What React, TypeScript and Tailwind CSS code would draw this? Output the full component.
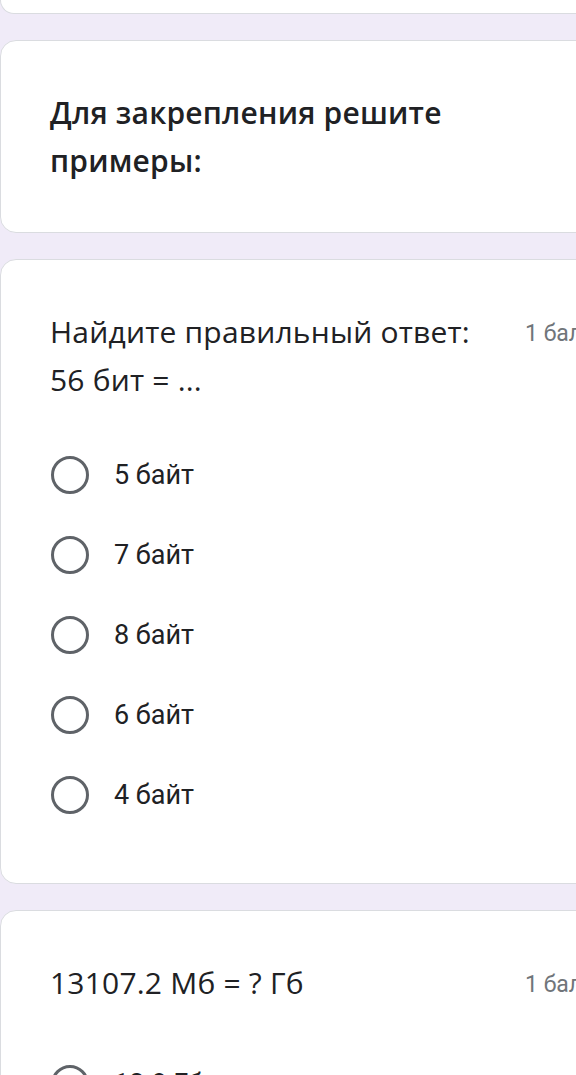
import React from "react";

const options = ["5 байт", "7 байт", "8 байт", "6 байт", "4 байт"];

function Radio({ label }: { label: string }) {
  return (
    <div className="flex h-[80px] items-center">
      <div className="ml-[1px] h-[38px] w-[38px] shrink-0 rounded-full border-[3.5px] border-[#5f6368]" />
      <span
        className="ml-[25px] text-[27px] leading-none text-[#202124]"
        style={{ fontFamily: "Roboto, 'Liberation Sans', sans-serif" }}
      >
        {label}
      </span>
    </div>
  );
}

export default function App() {
  const gs = { fontFamily: "'Open Sans', 'Liberation Sans', sans-serif" };
  const rb = { fontFamily: "Roboto, 'Liberation Sans', sans-serif" };
  return (
    <div className="h-[1075px] w-[576px] overflow-hidden bg-[#f0ebf8]">
      <div className="flex w-[640px] flex-col">
        {/* card 1 tail */}
        <div className="h-[14px] rounded-b-[16px] border-b border-l border-[#dadce0] bg-white" />
        {/* card 2 */}
        <div className="mt-[26px] rounded-[16px] border border-[#dadce0] bg-white pb-[47px] pl-[49px] pt-[48px]">
          <div
            className="text-[30px] font-semibold leading-[48px] tracking-[0.2px] text-[#202124]"
            style={gs}
          >
            <div>Для закрепления решите</div>
            <div>примеры:</div>
          </div>
        </div>
        {/* card 3 */}
        <div className="mt-[26px] rounded-[16px] border border-[#dadce0] bg-white pb-[48px] pl-[49px] pt-[48px]">
          <div className="flex">
            <div
              className="w-[475px] text-[30px] leading-[48px] tracking-[0.2px] text-[#202124]"
              style={gs}
            >
              <div>Найдите правильный ответ:</div>
              <div>56 бит = ...</div>
            </div>
            <div className="whitespace-nowrap pt-[2px] text-[23px] leading-[48px] text-[#70757a]" style={rb}>
              1 балл
            </div>
          </div>
          <div className="mt-[31px] flex flex-col">
            {options.map((o) => (
              <Radio key={o} label={o} />
            ))}
          </div>
        </div>
        {/* card 4 */}
        <div className="mt-[26px] rounded-[16px] border border-[#dadce0] bg-white pb-[48px] pl-[49px] pt-[48px]">
          <div className="flex">
            <div
              className="w-[475px] text-[30px] leading-[48px] tracking-[0.2px] text-[#202124]"
              style={gs}
            >
              13107.2 Мб = ? Гб
            </div>
            <div className="whitespace-nowrap pt-[2px] text-[23px] leading-[48px] text-[#70757a]" style={rb}>
              1 балл
            </div>
          </div>
          <div className="mt-[35px] flex flex-col">
            <Radio label="12.8 Гб" />
          </div>
        </div>
      </div>
    </div>
  );
}
